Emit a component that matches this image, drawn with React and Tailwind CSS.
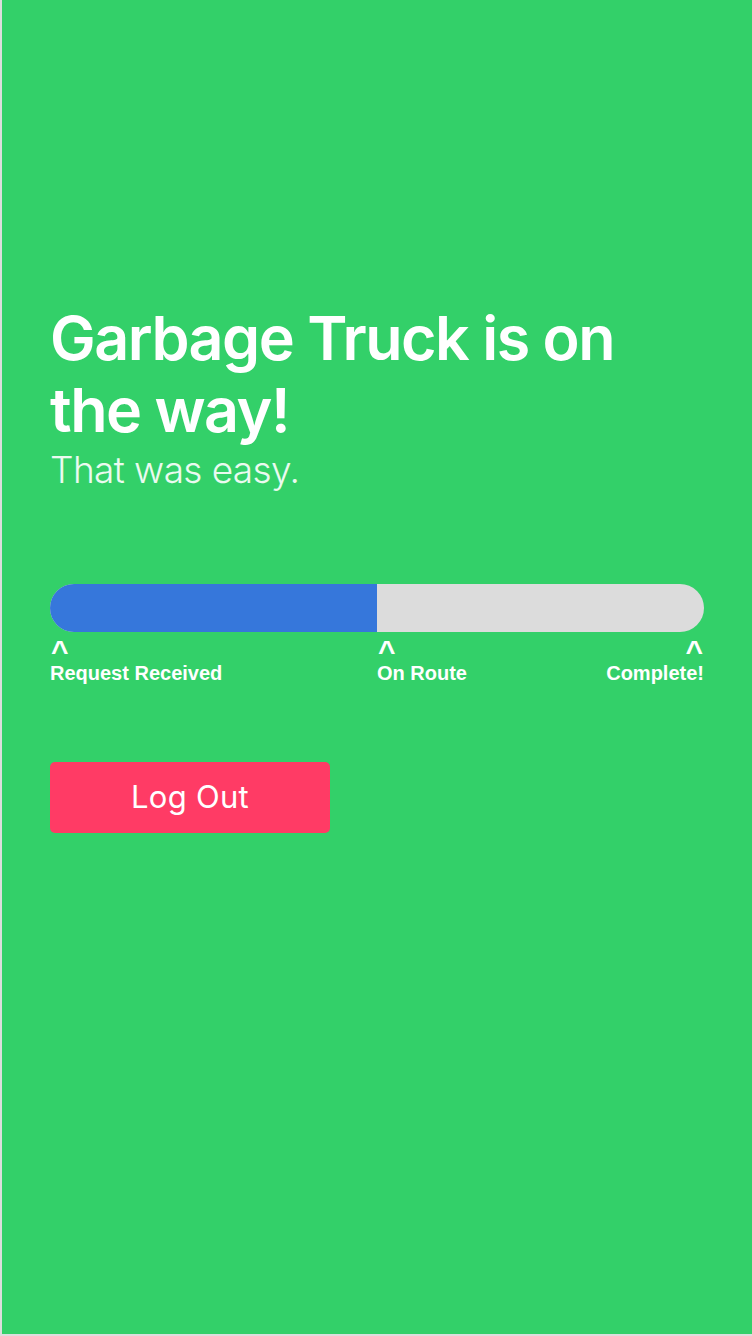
import React from 'react'

const steps = [
    { label: 'Request Received', cls: 'w-[327px] items-start' },
    { label: 'On Route', cls: 'flex-1 items-start' },
    { label: 'Complete!', cls: 'items-end' },
];

const App = () => {
    const progress = 50;

    return (
        <div className="w-[752px] h-[1336px] bg-[#dddddd]">
            <div className="h-[1334px] ml-[2px] bg-[#33d069] pt-[302px] px-[48px] font-['Inter',sans-serif]">
                <h1 className="text-white text-[61px] font-semibold leading-[72px] tracking-[-1.5px]">
                    Garbage Truck is on the way!
                </h1>
                <p className="text-white/90 text-[37px] font-light leading-[48px] tracking-[-0.6px]">
                    That was easy.
                </p>

                <div className="mt-[90px] w-[654px]">
                    <div className="h-[48px] rounded-full bg-[#dcdcdc] overflow-hidden flex">
                        <div className="h-full bg-[#3677db]" style={{ width: `${progress}%` }} />
                    </div>
                    <div className="flex font-['Liberation_Sans',Arial,sans-serif] font-bold text-white mt-[7px]">
                        {steps.map((s, idx) => (
                            <div key={idx} className={`flex flex-col whitespace-nowrap ${s.cls}`}>
                                <span className="block text-[30px] leading-[24px] h-[24px] px-[1px]">^</span>
                                <span className="text-[20px] leading-[20px]">{s.label}</span>
                            </div>
                        ))}
                    </div>
                </div>

                <button className="mt-[79px] w-[280px] h-[71px] rounded-[5px] bg-[#ff3b65] text-white text-[31px] font-normal tracking-[0.3px]">
                    Log Out
                </button>
            </div>
        </div>
    )
}

export default App
